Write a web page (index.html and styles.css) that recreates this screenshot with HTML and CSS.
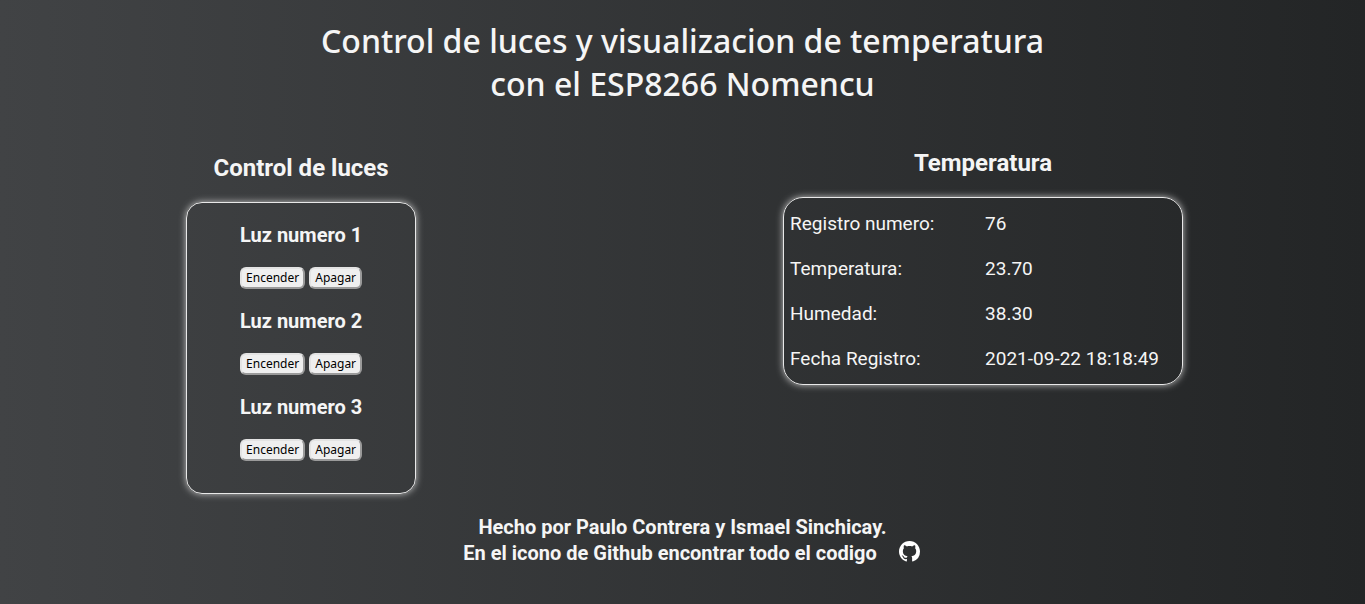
FILE: index.html
```html
<!DOCTYPE html>
<html lang="es">
<head>
<meta charset="utf-8">
<meta name="viewport" content="width=device-width, initial-scale=1">
<title>Control de luces y temperatura</title>
<link rel="stylesheet" href="styles.css">
</head>
<body>
<header class="header">
  <h1 class="title">Control de luces y visualizacion de temperatura<br>con el ESP8266 Nomencu</h1>
</header>
<main class="panels">
  <section class="lights">
    <h2 class="heading">Control de luces</h2>
    <div class="card lights-card">
      <div class="light">
        <h3 class="light-name">Luz numero 1</h3>
        <div class="actions"><button class="btn" type="button">Encender</button><button class="btn" type="button">Apagar</button></div>
      </div>
      <div class="light">
        <h3 class="light-name">Luz numero 2</h3>
        <div class="actions"><button class="btn" type="button">Encender</button><button class="btn" type="button">Apagar</button></div>
      </div>
      <div class="light">
        <h3 class="light-name">Luz numero 3</h3>
        <div class="actions"><button class="btn" type="button">Encender</button><button class="btn" type="button">Apagar</button></div>
      </div>
    </div>
  </section>
  <section class="climate">
    <h2 class="heading">Temperatura</h2>
    <div class="card climate-card">
      <table class="readings">
        <tr><th scope="row">Registro numero:</th><td>76</td></tr>
        <tr><th scope="row">Temperatura:</th><td>23.70</td></tr>
        <tr><th scope="row">Humedad:</th><td>38.30</td></tr>
        <tr><th scope="row">Fecha Registro:</th><td>2021-09-22 18:18:49</td></tr>
      </table>
    </div>
  </section>
</main>
<footer class="footer">
  <p class="credit">Hecho por Paulo Contrera y Ismael Sinchicay.</p>
  <p class="credit source">En el icono de Github encontrar todo el codigo
    <a class="github" href="#" aria-label="Github"><svg viewBox="0 0 16 16" width="21" height="21" fill="currentColor" aria-hidden="true"><path d="M8 0C3.58 0 0 3.58 0 8c0 3.54 2.29 6.53 5.47 7.59.4.07.55-.17.55-.38 0-.19-.01-.82-.01-1.49-2.01.37-2.53-.49-2.69-.94-.09-.23-.48-.94-.82-1.13-.28-.15-.68-.52-.01-.53.63-.01 1.08.58 1.23.82.72 1.21 1.87.87 2.33.66.07-.52.28-.87.51-1.07-1.78-.2-3.64-.89-3.64-3.95 0-.87.31-1.59.82-2.15-.08-.2-.36-1.02.08-2.12 0 0 .67-.21 2.2.82.64-.18 1.32-.27 2-.27s1.36.09 2 .27c1.53-1.04 2.2-.82 2.2-.82.44 1.1.16 1.92.08 2.12.51.56.82 1.27.82 2.15 0 3.07-1.87 3.75-3.65 3.95.29.25.54.73.54 1.48 0 1.07-.01 1.93-.01 2.2 0 .21.15.46.55.38A8.01 8.01 0 0 0 16 8c0-4.42-3.58-8-8-8z"/></svg></a>
  </p>
</footer>
</body>
</html>
```

FILE: styles.css
```css
* {
  box-sizing: border-box;
}

body {
  margin: 0;
  min-height: 100vh;
  background: linear-gradient(to right, #414345, #232526);
  color: #f5f5f5;
  font-family: Roboto, sans-serif;
}

.header {
  padding: 19px 20px 0;
  text-align: center;
}

.title {
  margin: 0;
  font-family: "Noto Sans", sans-serif;
  font-size: 32px;
  font-weight: 500;
  line-height: 43px;
}

.panels {
  display: grid;
  grid-template-columns: 44% 56%;
  justify-items: center;
  align-items: start;
  margin-top: 43px;
  padding-left: 1px;
}

.lights {
  padding-top: 5px;
}

.heading {
  margin: 0 0 19px;
  font-size: 24px;
  font-weight: 700;
  line-height: 30px;
  text-align: center;
}

.card {
  border: 1px solid #e8e8e8;
  border-radius: 20px;
  box-shadow: 0 0 7px #c0c0c0;
}

.lights-card {
  display: flex;
  flex-direction: column;
  gap: 20px;
  min-width: 230px;
  padding: 20px 52px 32px;
  border-radius: 16px;
}

.climate-card {
  padding: 3px 0;
}

.light-name {
  margin: 0 0 20px;
  font-size: 20px;
  font-weight: 700;
  line-height: 24px;
  text-align: center;
}

.actions {
  display: flex;
  justify-content: center;
  gap: 4px;
}

.btn {
  height: 22px;
  padding: 0 4px;
  border: 2px solid;
  border-color: #e3e3e3 #9a9a9a #9a9a9a #e3e3e3;
  border-radius: 6px;
  background: #efefef;
  color: #000;
  font-family: "Noto Sans", sans-serif;
  font-size: 12px;
  line-height: 18px;
}

.readings {
  width: 398px;
  border-collapse: collapse;
  font-size: 19px;
  line-height: 23px;
}

.readings th,
.readings td {
  padding: 11px 6px;
  font-weight: 400;
  text-align: left;
}

.readings th {
  width: 49%;
}

.footer {
  margin-top: 20px;
  text-align: center;
}

.credit {
  margin: 0;
  font-size: 20px;
  font-weight: 700;
  line-height: 26px;
}

.source {
  display: flex;
  justify-content: center;
  align-items: center;
  gap: 22px;
  padding-left: 18px;
}

.github {
  display: flex;
  padding-bottom: 3px;
  color: #fff;
}
```
